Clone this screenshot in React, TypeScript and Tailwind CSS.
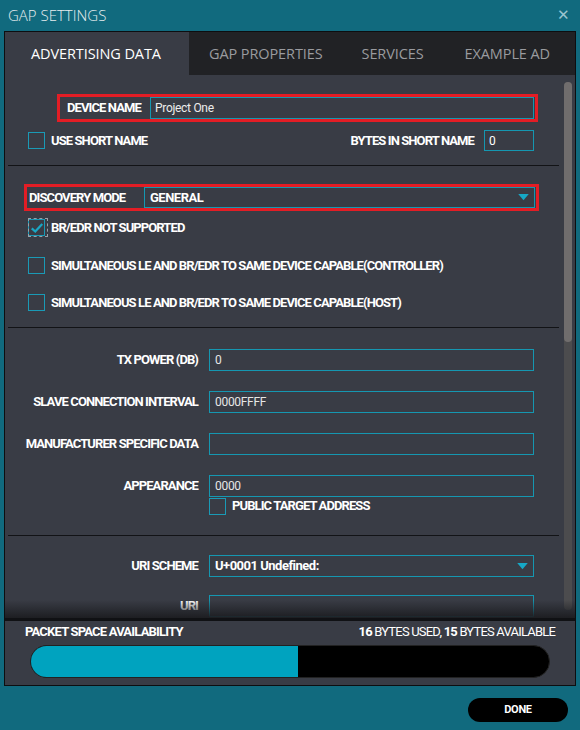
import React from "react";

const font = { fontFamily: '"Roboto", "Liberation Sans", sans-serif' };
const label = "font-bold text-[13px] tracking-[-0.9px]";

const Check = ({ checked = false }: { checked?: boolean }) => (
  <div className="relative w-[17px] h-[17px] border border-[#1a9ab6] shrink-0">
    {checked && (
      <>
        <div className="absolute -top-[2px] -left-[1px] w-[20px] h-[19px] border border-dashed border-[#9aa0a8]" />
        <svg viewBox="0 0 16 16" className="absolute left-[1px] top-[1px] w-[14px] h-[14px]">
          <path d="M2 8.5 L6 12 L14 3.5" fill="none" stroke="#1aa7c4" strokeWidth="2.6" />
        </svg>
      </>
    )}
  </div>
);

const Arrow = () => (
  <svg viewBox="0 0 12 8" className="w-[11px] h-[7px] shrink-0">
    <path d="M0 0 H12 L6 7 Z" fill="#16a8c6" />
  </svg>
);

const Field = ({ name, value = "", select = false }: { name: string; value?: string; select?: boolean }) => (
  <div className="grid grid-cols-[193px_325px] gap-x-[11px] items-center">
    <div className={`text-right text-white ${label}`}>{name}</div>
    <div className="h-[22px] border border-[#1597b1] flex items-center px-[5px] justify-between">
      <span className={select ? "text-white font-bold text-[13px] tracking-[-0.5px]" : "text-[#e6e6e6] text-[12px] tracking-[-0.3px]"}>{value}</span>
      {select && <Arrow />}
    </div>
  </div>
);

const Divider = () => <div className="mx-[3px] h-px bg-[#121316]" />;

export default function App() {
  return (
    <div className="w-[580px] h-[730px] bg-[#116a7e] flex flex-col" style={font}>
      <div className="h-[31px] flex items-center justify-between px-[8px]">
        <span className="text-[#e8eef0] text-[15px] font-light" style={{ fontFamily: '"Open Sans", sans-serif' }}>GAP SETTINGS</span>
        <span className="text-[#9bc4cf] text-[15px] mr-[2px]">✕</span>
      </div>

      <div className="mx-[4px] h-[655px] border border-[#0d0e10] flex flex-col bg-[#393c45]">
        <div className="h-[43px] bg-[#212225] flex text-[14.5px] tracking-[-0.1px] shrink-0" style={{ fontFamily: '"Open Sans", sans-serif' }}>
          <div className="w-[184px] bg-[#393c45] flex items-center pl-[26px] text-white">ADVERTISING DATA</div>
          <div className="flex items-center pl-[20px] text-[#9a9b9f]">GAP PROPERTIES</div>
          <div className="flex items-center pl-[39px] text-[#9a9b9f]">SERVICES</div>
          <div className="flex items-center pl-[41px] text-[#9a9b9f]">EXAMPLE AD</div>
        </div>

        <div className="flex flex-1 relative overflow-hidden">
          <div className="flex-1 flex flex-col text-white">
            <div className="mt-[19px] ml-[52px] w-[481px] h-[28px] border-[3px] border-[#e31d25] flex items-center">
              <span className={`${label} pl-[7px] w-[90px]`}>DEVICE NAME</span>
              <div className="h-[22px] flex-1 mr-[1px] border border-[#1597b1] flex items-center px-[4px] text-[12px] tracking-[-0.3px] text-[#ececec]">Project One</div>
            </div>

            <div className="mt-[8px] flex items-center pl-[23px] pr-[28px] h-[21px]">
              <Check />
              <span className={`ml-[6px] ${label}`}>USE SHORT NAME</span>
              <span className={`ml-auto ${label}`}>BYTES IN SHORT NAME</span>
              <div className="ml-[10px] w-[50px] h-[21px] border border-[#1597b1] flex items-center px-[4px] text-[12px]">0</div>
            </div>

            <div className="mt-[14px]"><Divider /></div>

            <div className="mt-[18px] ml-[19px] w-[515px] h-[27px] border-[3px] border-[#e31d25] flex items-center">
              <span className={`${label} pl-[2px] w-[117px]`}>DISCOVERY MODE</span>
              <div className="h-[21px] flex-1 mr-[1px] border border-[#1597b1] flex items-center justify-between px-[5px]">
                <span className="font-bold text-[13px] tracking-[-0.5px]">GENERAL</span>
                <Arrow />
              </div>
            </div>

            <div className="mt-[8px] flex items-center pl-[23px] h-[17px]">
              <Check checked />
              <span className={`ml-[6px] ${label}`}>BR/EDR NOT SUPPORTED</span>
            </div>

            <div className="mt-[21px] flex items-center pl-[23px] h-[17px]">
              <Check />
              <span className={`ml-[6px] ${label}`}>SIMULTANEOUS LE AND BR/EDR TO SAME DEVICE CAPABLE(CONTROLLER)</span>
            </div>

            <div className="mt-[20px] flex items-center pl-[23px] h-[17px]">
              <Check />
              <span className={`ml-[6px] ${label}`}>SIMULTANEOUS LE AND BR/EDR TO SAME DEVICE CAPABLE(HOST)</span>
            </div>

            <div className="mt-[16px]"><Divider /></div>

            <div className="mt-[21px] flex flex-col gap-[20px]">
              <Field name="TX POWER (DB)" value="0" />
              <Field name="SLAVE CONNECTION INTERVAL" value="0000FFFF" />
              <Field name="MANUFACTURER SPECIFIC DATA" />
              <div className="flex flex-col">
                <Field name="APPEARANCE" value="0000" />
                <div className="ml-[204px] flex items-center h-[18px]">
                  <Check />
                  <span className={`ml-[6px] ${label}`}>PUBLIC TARGET ADDRESS</span>
                </div>
              </div>
            </div>

            <div className="mt-[20px]"><Divider /></div>

            <div className="mt-[19px] flex flex-col gap-[18px]">
              <Field name="URI SCHEME" value="U+0001 Undefined:" select />
              <Field name="URI" />
            </div>
          </div>

          <div className="w-[13px] shrink-0 flex flex-col pl-[2px] pt-[7px] pb-[8px]">
            <div className="w-[8px] flex-1 rounded-full bg-[#4c4c4e] flex flex-col">
              <div className="h-[260px] rounded-full bg-[#706d6d]" />
            </div>
          </div>

          <div className="absolute left-0 right-0 bottom-0 h-[18px] bg-gradient-to-b from-transparent to-[#1d1e22]" />
        </div>

        <div className="h-[3px] bg-[#101114] shrink-0" />

        <div className="h-[64px] shrink-0 px-[20px] pt-[1px] text-white">
          <div className="flex justify-between items-center text-[13px] tracking-[-0.8px]">
            <span className="font-bold">PACKET SPACE AVAILABILITY</span>
            <span><b>16</b> BYTES USED, <b>15</b> BYTES AVAILABLE</span>
          </div>
          <div className="mt-[3px] ml-[5px] w-[520px] h-[33px] rounded-full bg-black flex overflow-hidden border border-[#222]">
            <div className="h-full bg-[#00a3bf]" style={{ width: "51.5%" }} />
          </div>
        </div>
      </div>

      <div className="flex justify-end pr-[12px] pt-[12px]">
        <div className="w-[100px] h-[24px] rounded-full bg-black text-white font-bold text-[11px] tracking-[-0.3px] flex items-center justify-center">DONE</div>
      </div>
    </div>
  );
}
